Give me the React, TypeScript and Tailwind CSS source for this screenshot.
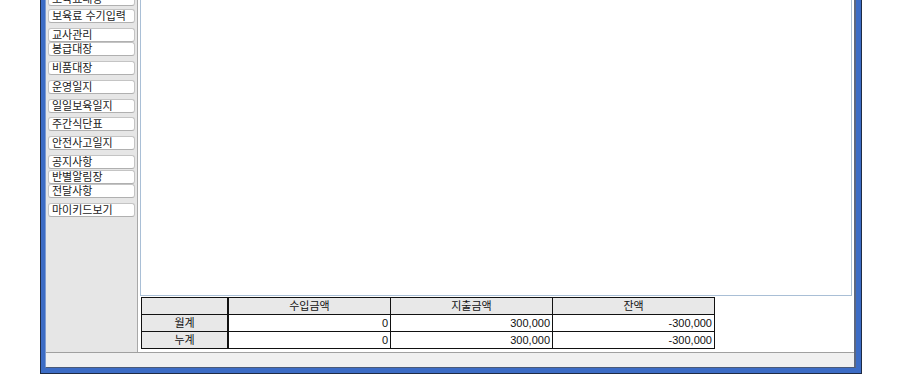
import React from 'react';

interface MenuItem {
  label: string;
  gap: string;
}

const menu: MenuItem[] = [
  { label: '보육료대상', gap: '-mt-[8px]' },
  { label: '보육료 수기입력', gap: 'mt-[3px]' },
  { label: '교사관리', gap: 'mt-[5px]' },
  { label: '봉급대장', gap: 'mt-0' },
  { label: '비품대장', gap: 'mt-[5px]' },
  { label: '운영일지', gap: 'mt-[5px]' },
  { label: '일일보육일지', gap: 'mt-[5px]' },
  { label: '주간식단표', gap: 'mt-[4px]' },
  { label: '안전사고일지', gap: 'mt-[5px]' },
  { label: '공지사항', gap: 'mt-[5px]' },
  { label: '반별알림장', gap: 'mt-[1px]' },
  { label: '전달사항', gap: 'mt-0' },
  { label: '마이키드보기', gap: 'mt-[5px]' },
];

const rows = [
  { name: '월계', income: '0', expense: '300,000', balance: '-300,000' },
  { name: '누계', income: '0', expense: '300,000', balance: '-300,000' },
];

const font = { fontFamily: '"Liberation Sans", "Noto Sans CJK KR", sans-serif' };

const SideButton: React.FC<MenuItem> = ({ label, gap }) => (
  <div
    className={`${gap} h-[14px] w-[87px] shrink-0 rounded-[3px] border border-[#c4c4c4] border-b-[#b0b0b0] bg-white pl-[3px] text-[11px] leading-[12px] text-[#1a1a1a]`}
  >
    {label}
  </div>
);

const App: React.FC = () => {
  return (
    <div className="h-[375px] w-[900px] overflow-hidden bg-white pl-[40px]" style={font}>
      {/* window frame */}
      <div className="h-[374px] w-[822px] border-b border-l border-r border-[#1f2b44]">
        <div className="flex h-full flex-col border-b-[5px] border-l-[4px] border-r-[5px] border-[#3c6cc5]">
          <div className="flex h-full flex-col border-b border-l border-r-2 border-b-[#4a5a78] border-l-[#7d9bd2] border-r-[#5c6780] bg-[#ececec]">
            <div className="flex h-[352px] shrink-0">
              {/* sidebar */}
              <div className="flex w-[92px] shrink-0 flex-col border-r border-[#a8a8a8] bg-[#e6e6e6] px-[2px]">
                {menu.map((m) => (
                  <SideButton key={m.label} {...m} />
                ))}
              </div>

              {/* content */}
              <div className="flex flex-1 flex-col bg-white pl-[2px] pr-[2px]">
                <div className="h-[296px] shrink-0 border-b border-l border-r border-[#a9bfd6] bg-white" />
                <div className="ml-[1px] mt-[1px] grid w-[574px] grid-cols-[87px_162px_162px_162px] border-l border-t border-[#111] text-[11px] text-[#111]">
                  <div className="h-[17px] border-b border-r-2 border-[#111] bg-[#e8e8e8]" />
                  <div className="h-[17px] border-b border-r border-[#111] bg-[#e8e8e8] text-center leading-[17px]">수입금액</div>
                  <div className="h-[17px] border-b border-r border-[#111] bg-[#e8e8e8] text-center leading-[17px]">지출금액</div>
                  <div className="h-[17px] border-b border-r border-[#111] bg-[#e8e8e8] text-center leading-[17px]">잔액</div>
                  {rows.map((r) => (
                    <React.Fragment key={r.name}>
                      <div className="h-[17px] border-b border-r-2 border-[#111] bg-[#e8e8e8] text-center leading-[17px]">{r.name}</div>
                      <div className="h-[17px] border-b border-r border-[#111] bg-white pr-[2px] text-right leading-[17px]">{r.income}</div>
                      <div className="h-[17px] border-b border-r border-[#111] bg-white pr-[2px] text-right leading-[17px]">{r.expense}</div>
                      <div className="h-[17px] border-b border-r border-[#111] bg-white pr-[2px] text-right leading-[17px]">{r.balance}</div>
                    </React.Fragment>
                  ))}
                </div>
              </div>
            </div>

            {/* status bar */}
            <div className="flex-1 border-t border-[#a0a0a0] bg-[#f0f0f0]" />
          </div>
        </div>
      </div>
    </div>
  );
};

export default App;
